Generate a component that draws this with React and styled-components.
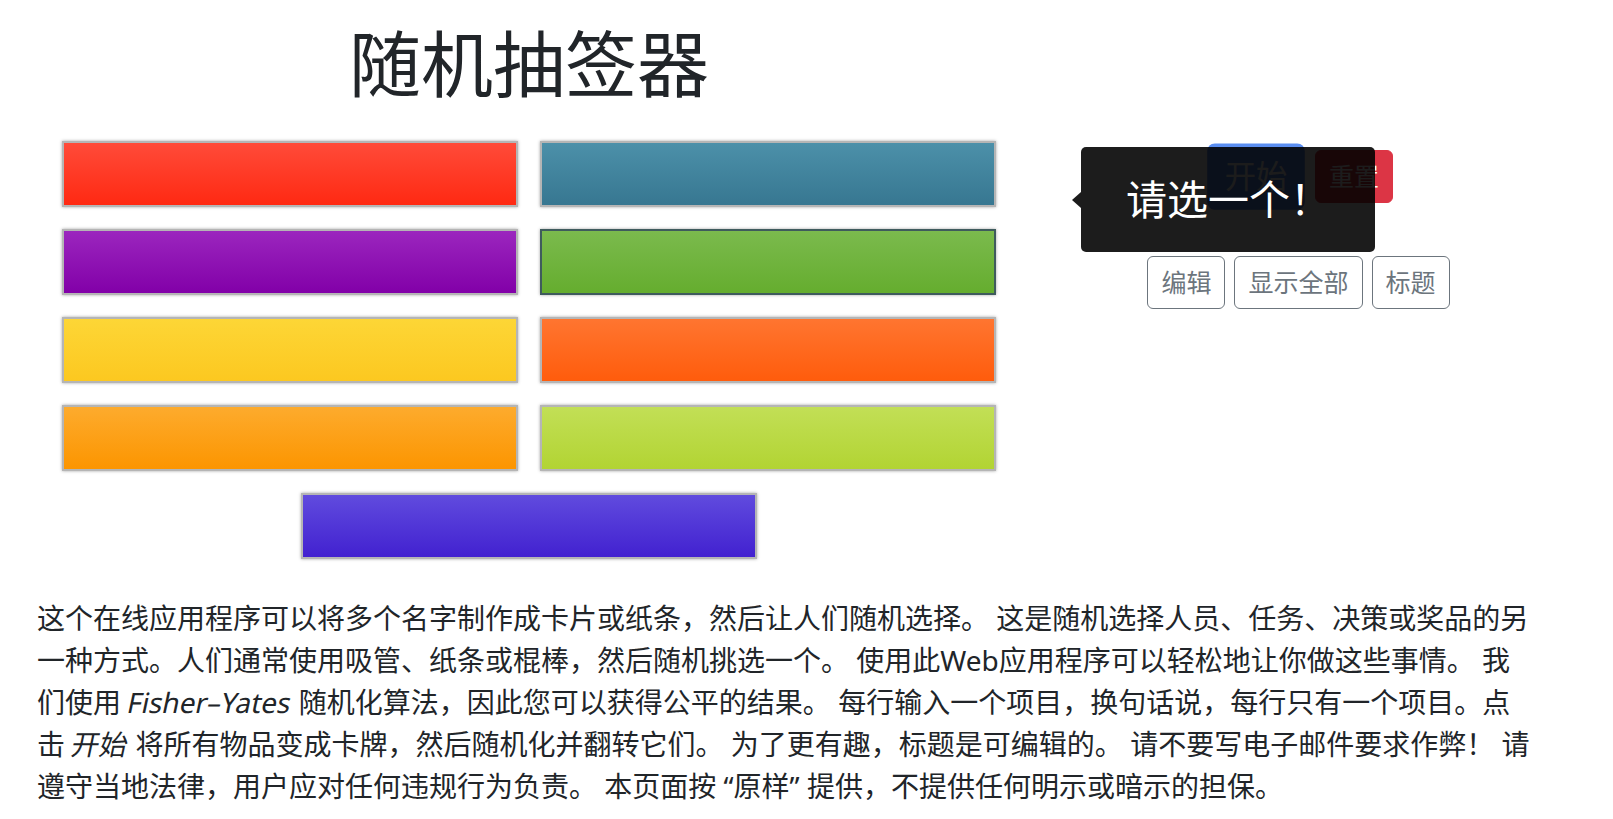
import React from "react";
import styled, { createGlobalStyle } from "styled-components";

const GlobalStyle = createGlobalStyle`
  html, body {
    margin: 0;
    background: #fff;
    color: #212529;
    font-family: "Noto Sans", "Noto Sans CJK SC", sans-serif;
  }
  * { box-sizing: border-box; }
`;

const Page = styled.main`
  padding: 0 37px;
`;

const Top = styled.div`
  display: flex;
`;

const Board = styled.section`
  width: 984px;
`;

const Title = styled.h1`
  margin: 20px 0 0;
  text-align: center;
  font-size: 72px;
  font-weight: 400;
  line-height: 1.2;
`;

const Cards = styled.div`
  margin-top: 35px;
  display: grid;
  grid-template-columns: repeat(2, 456px);
  grid-auto-rows: 66px;
  gap: 22px;
  justify-content: center;
`;

const Card = styled.div`
  background: linear-gradient(${(p) => p.$from}, ${(p) => p.$to});
  border: 2px solid ${(p) => (p.$active ? "#3f5b5d" : "#b5b5b5")};
  box-shadow: 0 0 3px rgba(0, 0, 0, 0.35);
  ${(p) =>
    p.$wide &&
    `
    grid-column: 1 / -1;
    justify-self: center;
    width: 456px;
  `}
`;

const Side = styled.aside`
  flex: 1;
  position: relative;
  padding-top: 150px;
  display: flex;
  flex-direction: column;
  align-items: center;
`;

const ActionRow = styled.div`
  display: flex;
  gap: 20px;
  padding-left: 13px;
`;

const ToolRow = styled.div`
  display: flex;
  gap: 9px;
  margin-top: 53px;
`;

const Button = styled.button`
  font-family: inherit;
  font-size: 25px;
  line-height: 37px;
  padding: 7px 13px;
  border-radius: 6px;
  border: 1px solid ${(p) => p.$color};
  background: ${(p) => (p.$outline ? "#fff" : p.$color)};
  color: ${(p) => (p.$outline ? p.$color : "#fff")};
  white-space: nowrap;
  cursor: pointer;
  ${(p) => p.$scale && `transform: scale(${p.$scale});`}
`;

const Tooltip = styled.div`
  position: absolute;
  z-index: 5;
  left: 60px;
  top: 147px;
  width: 294px;
  padding: 21px 0 21px 45px;
  border-radius: 5px;
  background: rgba(0, 0, 0, 0.89);
  color: #fff;
  font-size: 41px;
  line-height: 63px;
  white-space: nowrap;

  &::before {
    content: "";
    position: absolute;
    left: -9px;
    top: 50%;
    margin-top: -8px;
    border-style: solid;
    border-width: 8px 9px 8px 0;
    border-color: transparent rgba(0, 0, 0, 0.89) transparent transparent;
  }
`;

const About = styled.p`
  max-width: 1497px;
  margin: 38px 0 0;
  font-size: 28px;
  line-height: 1.5;
`;

/* synthetic oblique: keeps the upright widths, like the reference */
const Slant = styled.span`
  display: inline-block;
  transform: skewX(-12deg);
`;

const cards = [
  { from: "#ff4b39", to: "#ff2912" },
  { from: "#4c90a9", to: "#377791" },
  { from: "#9b26be", to: "#8200a8" },
  { from: "#7bba4d", to: "#65ad2e", active: true },
  { from: "#fdd636", to: "#fcc820" },
  { from: "#ff7530", to: "#ff5c0c" },
  { from: "#fdab2d", to: "#fc9500" },
  { from: "#c2df56", to: "#b2d433" },
  { from: "#604bde", to: "#4221d0", wide: true },
];

export default function App() {
  return (
    <>
      <GlobalStyle />
      <Page>
        <Top>
          <Board>
            <Title>随机抽签器</Title>
            <Cards>
              {cards.map((c, i) => (
                <Card
                  key={i}
                  $from={c.from}
                  $to={c.to}
                  $active={c.active}
                  $wide={c.wide}
                />
              ))}
            </Cards>
          </Board>
          <Side>
            <ActionRow>
              <Button $color="#5b8ef0" $scale={1.25}>
                开始
              </Button>
              <Button $color="#dc3545">重置</Button>
            </ActionRow>
            <ToolRow>
              <Button $outline $color="#6c757d">
                编辑
              </Button>
              <Button $outline $color="#6c757d">
                显示全部
              </Button>
              <Button $outline $color="#6c757d">
                标题
              </Button>
            </ToolRow>
            <Tooltip>请选一个！</Tooltip>
          </Side>
        </Top>
        <About>
          这个在线应用程序可以将多个名字制作成卡片或纸条，然后让人们随机选择。
          这是随机选择人员、任务、决策或奖品的另一种方式。人们通常使用吸管、纸条或棍棒，然后随机挑选一个。
          使用此Web应用程序可以轻松地让你做这些事情。 我们使用 <Slant>Fisher–Yates</Slant>{" "}
          随机化算法，因此您可以获得公平的结果。
          每行输入一个项目，换句话说，每行只有一个项目。点击 <Slant>开始</Slant>{" "}
          将所有物品变成卡牌，然后随机化并翻转它们。 为了更有趣，标题是可编辑的。
          请不要写电子邮件要求作弊！ 请遵守当地法律，用户应对任何违规行为负责。
          本页面按 “原样” 提供，不提供任何明示或暗示的担保。
        </About>
      </Page>
    </>
  );
}
